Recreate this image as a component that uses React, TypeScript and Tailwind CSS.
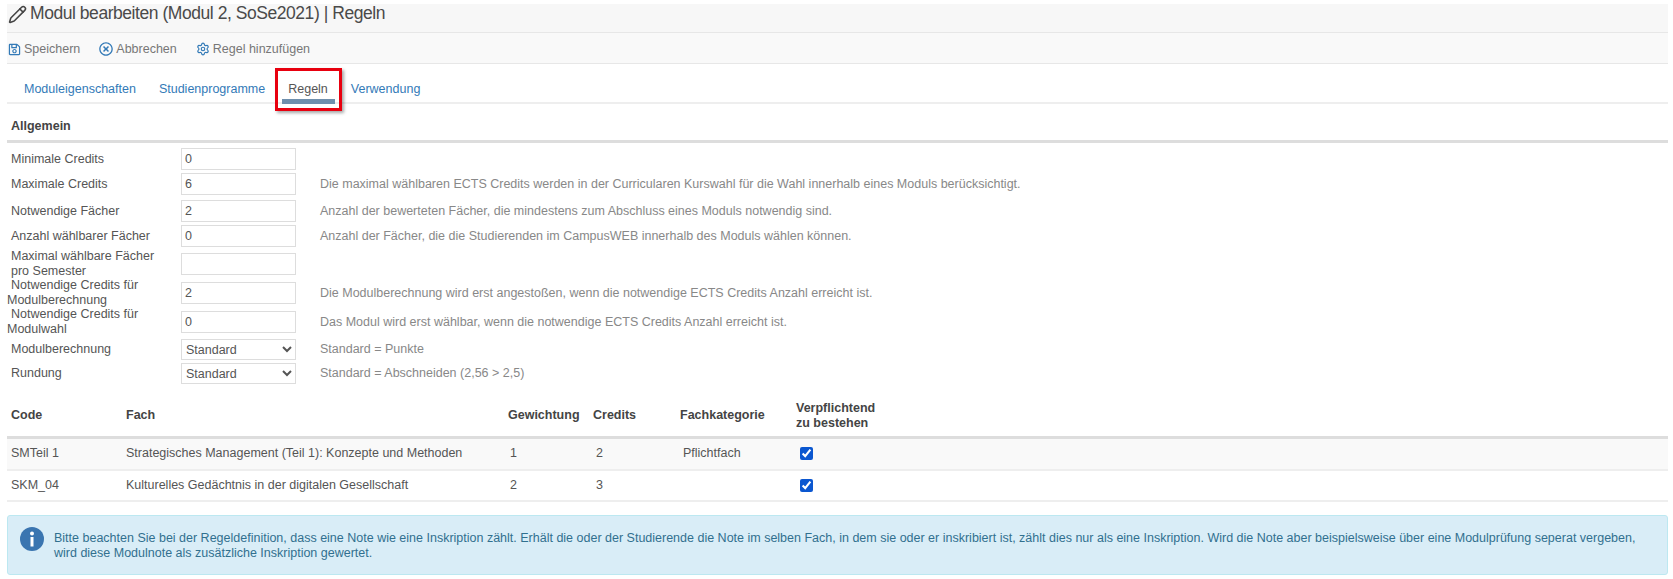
import React from "react";
import { Pencil, Settings } from "lucide-react";
import { FaRegSave, FaRegTimesCircle } from "react-icons/fa";

const rows = [
  { label: "Minimale Credits", value: "0", hint: "", mt: "mt-[5px]" },
  { label: "Maximale Credits", value: "6", hint: "Die maximal wählbaren ECTS Credits werden in der Curricularen Kurswahl für die Wahl innerhalb eines Moduls berücksichtigt.", mt: "mt-[3px]" },
  { label: "Notwendige Fächer", value: "2", hint: "Anzahl der bewerteten Fächer, die mindestens zum Abschluss eines Moduls notwendig sind.", mt: "mt-[5px]" },
  { label: "Anzahl wählbarer Fächer", value: "0", hint: "Anzahl der Fächer, die die Studierenden im CampusWEB innerhalb des Moduls wählen können.", mt: "mt-[3px]" },
  { label: "Maximal wählbare Fächer pro Semester", value: "", hint: "", mt: "mt-[6px]" },
  { label: "Notwendige Credits für Modulberechnung", value: "2", hint: "Die Modulberechnung wird erst angestoßen, wenn die notwendige ECTS Credits Anzahl erreicht ist.", mt: "mt-[7px]", hang: true },
  { label: "Notwendige Credits für Modulwahl", value: "0", hint: "Das Modul wird erst wählbar, wenn die notwendige ECTS Credits Anzahl erreicht ist.", mt: "mt-[7px]", hang: true },
];

const selects = [
  { label: "Modulberechnung", hint: "Standard = Punkte", mt: "mt-[6px]" },
  { label: "Rundung", hint: "Standard = Abschneiden (2,56 > 2,5)", mt: "mt-[3px]" },
];

function Label({ text, hang }: { text: string; hang?: boolean }) {
  return (
    <div className={hang ? "w-[174px] shrink-0 pr-2 indent-[4px] text-[12.5px] leading-[15px] text-[#555]" : "w-[174px] shrink-0 pl-[4px] pr-2 text-[12.5px] leading-[15px] text-[#555]"}>
      {text}
    </div>
  );
}

export default function App() {
  return (
    <div className="h-[579px] w-full overflow-hidden bg-white pl-[7px] pr-[5px] pt-[4px] font-['Liberation_Sans',Arial,sans-serif]">
      <div className="flex h-[28px] items-start gap-[3px] bg-[#f7f7f7] text-[#4a4a4a]">
        <Pencil size={19} strokeWidth={2} className="ml-[1px] mt-[1px] text-[#444]" />
        <h1 className="text-[17.5px] leading-[18px] font-normal tracking-[-0.45px]">Modul bearbeiten (Modul 2, SoSe2021) | Regeln</h1>
      </div>

      <div className="flex h-[32px] items-center border-y border-[#e7e7e7] bg-[#f9f9f9] pt-[2px] text-[12.5px] text-[#777]">
        <span className="ml-[1px] flex items-center gap-[3px]"><FaRegSave size={13} className="text-[#337ab7]" />Speichern</span>
        <span className="ml-[19px] flex items-center gap-[3px]"><FaRegTimesCircle size={14} className="text-[#337ab7]" />Abbrechen</span>
        <span className="ml-[19px] flex items-center gap-[3px]"><Settings size={14} className="text-[#337ab7]" />Regel hinzufügen</span>
      </div>

      <div className="relative flex h-[40px] items-start border-b-2 border-[#eee] pl-[17px] pt-[17px] text-[12.5px] leading-[16px]">
        <a className="text-[#337ab7]">Moduleigenschaften</a>
        <a className="ml-[23px] text-[#337ab7]">Studienprogramme</a>
        <div className="ml-[23px] text-[#555]">Regeln</div>
        <a className="ml-[23px] text-[#337ab7]">Verwendung</a>
        <div className="absolute left-[275px] top-[35px] h-[5px] w-[53px] bg-[#6f8fad]" />
        <div className="absolute left-[268px] top-[4px] h-[43px] w-[67px] border-[3px] border-[#e8000f] shadow-[2px_2px_3px_rgba(0,0,0,0.35)]" />
      </div>

      <div className="pl-[4px] pt-[14px] text-[12.5px] leading-[16px] font-bold text-[#444]">Allgemein</div>
      <div className="mt-[6px] h-[3px] bg-[#ddd]" />

      {rows.map((r) => (
        <div key={r.label} className={`flex h-[22px] items-center ${r.mt}`}>
          <Label text={r.label} hang={r.hang} />
          <input readOnly value={r.value} className="h-[22px] w-[115px] shrink-0 border border-[#ddd] px-[3px] text-[12.5px] text-[#555] outline-none" />
          <div className="ml-[24px] text-[12.5px] text-[#888]">{r.hint}</div>
        </div>
      ))}
      {selects.map((s) => (
        <div key={s.label} className={`flex h-[21px] items-center ${s.mt}`}>
          <Label text={s.label} />
          <select className="h-[21px] w-[115px] shrink-0 border border-[#ddd] bg-white text-[12.5px] text-[#555] outline-none">
            <option>Standard</option>
          </select>
          <div className="ml-[24px] text-[12.5px] text-[#888]">{s.hint}</div>
        </div>
      ))}

      <table className="mt-[12px] w-[1661px] table-fixed border-collapse text-[12.5px] text-[#555]">
        <colgroup>
          <col className="w-[116px]" />
          <col className="w-[380px]" />
          <col className="w-[87px]" />
          <col className="w-[87px]" />
          <col className="w-[114px]" />
          <col />
        </colgroup>
        <thead>
          <tr className="h-[41px] border-b-[3px] border-[#ddd] text-left leading-[15px] font-bold text-[#444]">
            <th className="pl-[4px]">Code</th>
            <th className="pl-[3px]">Fach</th>
            <th className="pl-[5px]">Gewichtung</th>
            <th className="pl-[3px]">Credits</th>
            <th className="pl-[3px]">Fachkategorie</th>
            <th className="pl-[5px]">Verpflichtend<br />zu bestehen</th>
          </tr>
        </thead>
        <tbody>
          <tr className="h-[33px] border-b-2 border-[#eee] bg-[#f9f9f9]">
            <td className="pl-[4px]">SMTeil 1</td>
            <td className="pl-[3px]">Strategisches Management (Teil 1): Konzepte und Methoden</td>
            <td className="pl-[7px]">1</td>
            <td className="pl-[6px]">2</td>
            <td className="pl-[6px]">Pflichtfach</td>
            <td className="pl-[9px]"><input type="checkbox" readOnly checked className="block size-[13px] accent-[#0b57d0]" /></td>
          </tr>
          <tr className="h-[31px] border-b-2 border-[#eee]">
            <td className="pl-[4px]">SKM_04</td>
            <td className="pl-[3px]">Kulturelles Gedächtnis in der digitalen Gesellschaft</td>
            <td className="pl-[7px]">2</td>
            <td className="pl-[6px]">3</td>
            <td className="pl-[6px]"></td>
            <td className="pl-[9px]"><input type="checkbox" readOnly checked className="block size-[13px] accent-[#0b57d0]" /></td>
          </tr>
        </tbody>
      </table>

      <div className="mt-[13px] flex h-[60px] w-[1661px] items-start gap-[10px] rounded-[3px] border border-[#bce8f1] bg-[#d9edf7] pl-[12px] pr-[20px] pt-[15px] text-[12.5px] leading-[15px] text-[#31708f]">
        <svg width="24" height="24" viewBox="0 0 24 24" className="-mt-[4px] shrink-0">
          <circle cx="12" cy="12" r="12" fill="#3a75b0" />
          <circle cx="12" cy="6.5" r="2" fill="#fff" />
          <rect x="10.5" y="10" width="3" height="9.5" fill="#fff" />
        </svg>
        <p>Bitte beachten Sie bei der Regeldefinition, dass eine Note wie eine Inskription zählt. Erhält die oder der Studierende die Note im selben Fach, in dem sie oder er inskribiert ist, zählt dies nur als eine Inskription. Wird die Note aber beispielsweise über eine Modulprüfung seperat vergeben,<br />wird diese Modulnote als zusätzliche Inskription gewertet.</p>
      </div>
    </div>
  );
}
